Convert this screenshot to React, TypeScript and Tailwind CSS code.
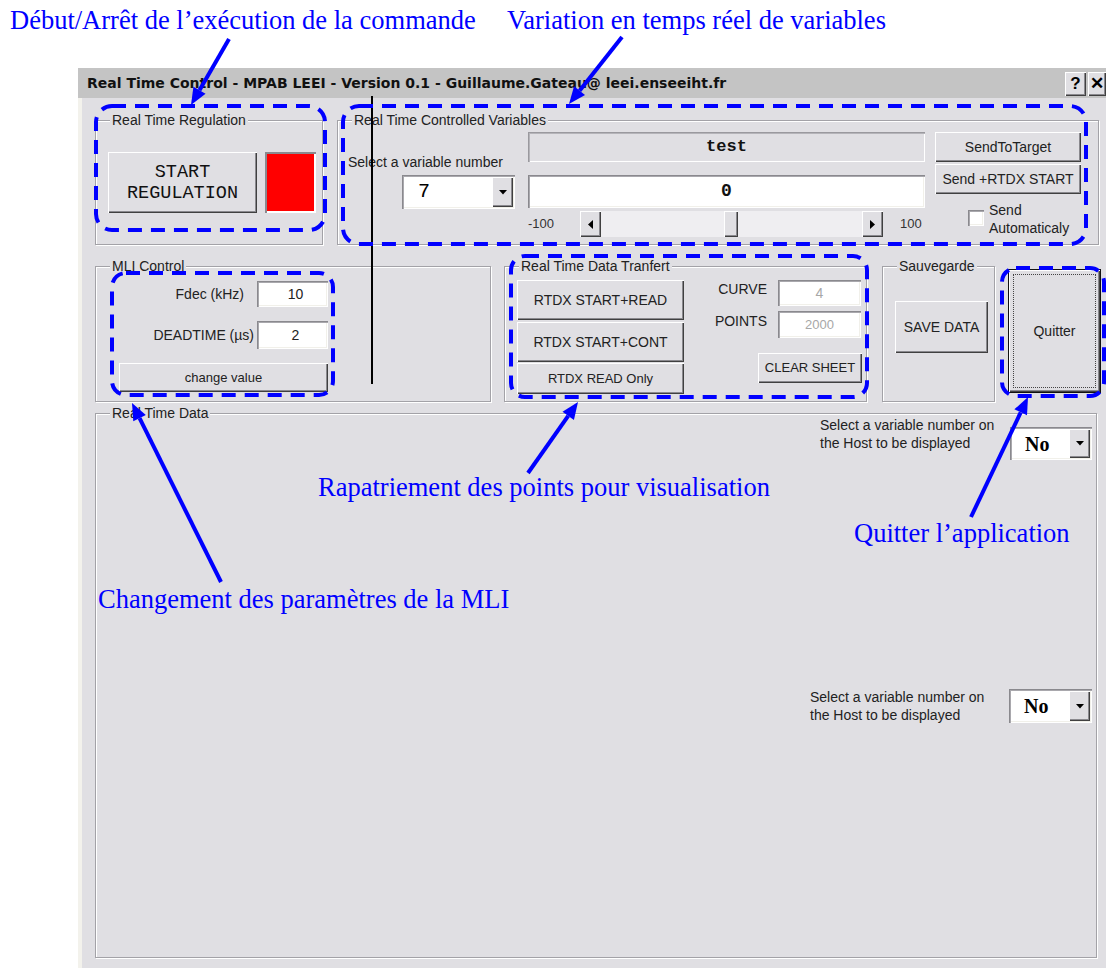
import React from "react";

const raised =
  "bg-[#e0dfe3] shadow-[inset_1px_1px_0_#ffffff,inset_-1px_-1px_0_#404040,inset_-2px_-2px_0_#8a898e]";
const sunken =
  "shadow-[inset_1px_1px_0_#8a898e,inset_2px_2px_0_#a9a8ad,inset_-1px_-1px_0_#ffffff,inset_-2px_-2px_0_#f1f0ea]";

function GroupBox({
  label,
  className,
  children,
}: {
  label: string;
  className: string;
  children?: React.ReactNode;
}) {
  return (
    <div
      className={`relative shrink-0 border border-[#a3a2a7] shadow-[inset_1px_1px_0_#ffffff,1px_1px_0_#ffffff] ${className}`}
    >
      <span className="absolute -top-[9px] left-[14px] bg-[#e0dfe3] px-[2px] text-[14px] leading-[16px] text-[#222]">
        {label}
      </span>
      {children}
    </div>
  );
}

function Tri({ dir }: { dir: "down" | "left" | "right" }) {
  if (dir === "down")
    return (
      <svg width="8" height="5" viewBox="0 0 8 5">
        <polygon points="0,0 8,0 4,4.5" fill="#000" />
      </svg>
    );
  if (dir === "left")
    return (
      <svg width="5" height="9" viewBox="0 0 5 9">
        <polygon points="5,0 5,9 0,4.5" fill="#000" />
      </svg>
    );
  return (
    <svg width="5" height="9" viewBox="0 0 5 9">
      <polygon points="0,0 0,9 5,4.5" fill="#000" />
    </svg>
  );
}

function Combo({
  value,
  className,
  textClass,
}: {
  value: string;
  className: string;
  textClass: string;
}) {
  return (
    <div className={`flex bg-white p-[2px] ${sunken} ${className}`}>
      <div className={`flex flex-1 items-center text-black ${textClass}`}>{value}</div>
      <div className={`flex w-[21px] items-center justify-center ${raised}`}>
        <Tri dir="down" />
      </div>
    </div>
  );
}

function Arrow({ x1, y1, x2, y2 }: { x1: number; y1: number; x2: number; y2: number }) {
  const dx = x2 - x1;
  const dy = y2 - y1;
  const len = Math.hypot(dx, dy);
  const ux = dx / len;
  const uy = dy / len;
  const hl = 17;
  const hw = 7;
  const bx = x2 - ux * hl;
  const by = y2 - uy * hl;
  const pts = `${x2},${y2} ${bx - uy * hw},${by + ux * hw} ${bx + uy * hw},${by - ux * hw}`;
  return (
    <g>
      <line x1={x1} y1={y1} x2={bx} y2={by} stroke="#0000ff" strokeWidth={4} />
      <polygon points={pts} fill="#0000ff" />
    </g>
  );
}

export default function App() {
  return (
    <div className="relative h-[968px] w-[1106px] overflow-hidden bg-white font-['Liberation_Sans',Arial,sans-serif]">
      {/* annotations above the window */}
      <div className="flex h-[68px] pt-[5px] font-['Liberation_Serif','Times_New_Roman',serif] text-[26.5px] leading-[30px] text-[#0000ff]">
        <span className="ml-[10px] w-[497px] shrink-0">Début/Arrêt de l’exécution de la commande</span>
        <span>Variation en temps réel de variables</span>
      </div>

      {/* window */}
      <div className="ml-[78px] w-[1028px]">
        <div className="flex h-[30px] items-center bg-[#c4c4c4] pl-[9px]">
          <span className="font-['DejaVu_Sans',sans-serif] text-[14px] font-bold text-[#111]">
            Real Time Control - MPAB LEEI - Version 0.1 - Guillaume.Gateau@ leei.enseeiht.fr
          </span>
          <div className="ml-auto flex gap-[2px] self-end pb-[2px]">
            <div className={`flex h-[24px] w-[21px] items-center justify-center text-[17px] font-bold ${raised}`}>?</div>
            <div className={`flex h-[24px] w-[18px] items-center justify-center text-[17px] font-bold ${raised}`}>✕</div>
          </div>
        </div>

        <div className="flex h-[870px] flex-col border-l-[4px] border-l-[#f3f2ec] bg-[#e0dfe3] pl-[13px] pt-[22px] text-[14px] text-[#222]">
          {/* row 1 */}
          <div className="flex">
            <GroupBox label="Real Time Regulation" className="h-[125px] w-[228px]">
              <div className="flex gap-[8px] pl-[12px] pt-[31px]">
                <div
                  className={`flex h-[61px] w-[149px] flex-col items-center justify-center font-['Liberation_Mono','Courier_New',monospace] text-[18.5px] leading-[21px] text-[#111] ${raised}`}
                >
                  <span>START</span>
                  <span>REGULATION</span>
                </div>
                <div className={`h-[61px] w-[51px] bg-[#ff0000] p-[3px] shadow-[inset_2px_2px_0_#8a898e,inset_-2px_-2px_0_#ffffff]`}>
                  <div className="h-full w-full bg-[#ff0000]" />
                </div>
              </div>
            </GroupBox>

            <GroupBox label="Real Time Controlled Variables" className="ml-[14px] h-[125px] w-[762px]">
              <div className="flex items-start pl-[10px] pt-[11px]">
                <div className="flex w-[167px] flex-col">
                  <span className="mt-[22px] leading-[16px]">Select a variable number</span>
                  <Combo
                    value="7"
                    className="ml-[54px] mt-[5px] h-[34px] w-[113px]"
                    textClass="pl-[14px] font-['Liberation_Mono','Courier_New',monospace] text-[20px]"
                  />
                </div>
                <div className="ml-[13px] flex w-[397px] flex-col">
                  <div
                    className={`flex h-[30px] items-center justify-center bg-[#e0dfe3] shadow-[inset_1px_1px_0_#9a999e,inset_2px_2px_0_#b5b4b9,inset_-1px_-1px_0_#ffffff] font-['Liberation_Mono','Courier_New',monospace] text-[17px] font-bold text-[#111]`}
                  >
                    test
                  </div>
                  <div
                    className={`mt-[13px] flex h-[33px] items-center justify-center bg-white font-['Liberation_Mono','Courier_New',monospace] text-[18px] font-bold text-[#111] ${sunken}`}
                  >
                    0
                  </div>
                  <div className="mt-[3px] flex h-[26px] items-center">
                    <span className="w-[52px] text-[13px] text-[#333]">-100</span>
                    <div className="flex h-[26px] w-[303px] bg-[#efeef1]">
                      <div className={`flex w-[21px] items-center justify-center ${raised}`}>
                        <Tri dir="left" />
                      </div>
                      <div className="flex flex-1">
                        <div className={`ml-[123px] w-[14px] ${raised}`} />
                      </div>
                      <div className={`flex w-[21px] items-center justify-center ${raised}`}>
                        <Tri dir="right" />
                      </div>
                    </div>
                    <span className="ml-[17px] text-[13px] text-[#333]">100</span>
                  </div>
                </div>
                <div className="ml-[10px] flex w-[146px] flex-col">
                  <div className={`flex h-[30px] items-center justify-center ${raised}`}>SendToTarget</div>
                  <div className={`mt-[2px] flex h-[30px] items-center justify-center ${raised}`}>Send +RTDX START</div>
                  <div className="mt-[7px] flex">
                    <div className={`ml-[33px] mt-[9px] h-[16px] w-[16px] bg-white ${sunken}`} />
                    <span className="ml-[5px] leading-[18px]">
                      Send
                      <br />
                      Automaticaly
                    </span>
                  </div>
                </div>
              </div>
            </GroupBox>
          </div>

          {/* row 2 */}
          <div className="mt-[21px] flex items-start">
            <GroupBox label="MLI Control" className="h-[136px] w-[396px]">
              <div className="flex w-[232px] flex-col pl-[23px] pt-[14px]">
                <div className="flex h-[26px] items-center justify-end">
                  <span className="mr-[13px]">Fdec (kHz)</span>
                  <div className={`flex h-[26px] w-[71px] items-center justify-center bg-white pl-[6px] ${sunken}`}>10</div>
                </div>
                <div className="mt-[14px] flex h-[28px] items-center justify-end">
                  <span className="mr-[3px]">DEADTIME (µs)</span>
                  <div className={`flex h-[28px] w-[71px] items-center justify-center bg-white pl-[6px] ${sunken}`}>2</div>
                </div>
                <div className={`mt-[14px] flex h-[29px] w-[209px] items-center justify-center text-[13px] ${raised}`}>
                  change value
                </div>
              </div>
            </GroupBox>

            <GroupBox label="Real Time Data Tranfert" className="ml-[13px] h-[136px] w-[363px]">
              <div className="flex pl-[12px] pt-[13px]">
                <div className="flex w-[167px] flex-col">
                  <div className={`flex h-[40px] items-center justify-center ${raised}`}>RTDX START+READ</div>
                  <div className={`mt-[2px] flex h-[40px] items-center justify-center ${raised}`}>RTDX START+CONT</div>
                  <div className={`mt-[1px] flex h-[31px] items-center justify-center text-[13px] ${raised}`}>RTDX READ Only</div>
                </div>
                <div className="flex w-[178px] flex-col items-end pr-[1px]">
                  <div className="flex items-start gap-[11px]">
                    <span className="pt-[1px] leading-[16px]">CURVE</span>
                    <div className={`flex h-[26px] w-[83px] items-center justify-center bg-white text-[#a7a7a7] ${sunken}`}>4</div>
                  </div>
                  <div className="mt-[5px] flex items-start gap-[11px]">
                    <span className="pt-[2px] leading-[16px]">POINTS</span>
                    <div className={`flex h-[27px] w-[83px] items-center justify-center bg-white text-[13px] text-[#a7a7a7] ${sunken}`}>
                      2000
                    </div>
                  </div>
                  <div className={`mr-[-1px] mt-[15px] flex h-[30px] w-[104px] items-center justify-center text-[13px] ${raised}`}>
                    CLEAR SHEET
                  </div>
                </div>
              </div>
            </GroupBox>

            <GroupBox label="Sauvegarde" className="ml-[15px] h-[136px] w-[113px]">
              <div className={`ml-[12px] mt-[34px] flex h-[52px] w-[93px] items-center justify-center ${raised}`}>SAVE DATA</div>
            </GroupBox>

            <div className="ml-[13px] mt-[3px] h-[124px] w-[93px] border border-[#111]">
              <div className={`flex h-full w-full p-[4px] ${raised}`}>
                <div className="flex flex-1 items-center justify-center border border-dotted border-[#444]">Quitter</div>
              </div>
            </div>
          </div>

          {/* row 3 */}
          <GroupBox label="Real Time Data" className="mt-[11px] h-[545px] w-[1002px]">
            <div className="flex flex-col items-end pr-[4px]">
              <div className="mt-[2px] flex">
                <span className="w-[190px] leading-[18px]">
                  Select a variable number on
                  <br />
                  the Host to be displayed
                </span>
                <Combo
                  value="No"
                  className="mt-[11px] h-[33px] w-[82px]"
                  textClass="pl-[13px] font-['Liberation_Serif','Times_New_Roman',serif] text-[20px] font-bold"
                />
              </div>
              <div className="mt-[228px] flex items-center">
                <span className="w-[199px] leading-[18px]">
                  Select a variable number on
                  <br />
                  the Host to be displayed
                </span>
                <Combo
                  value="No"
                  className="h-[34px] w-[83px]"
                  textClass="pl-[13px] font-['Liberation_Serif','Times_New_Roman',serif] text-[20px] font-bold"
                />
              </div>
            </div>
          </GroupBox>
        </div>
      </div>

      {/* annotation labels lying over the window */}
      <span className="absolute left-[318px] top-[472px] font-['Liberation_Serif','Times_New_Roman',serif] text-[26.5px] leading-[30px] text-[#0000ff]">
        Rapatriement des points pour visualisation
      </span>
      <span className="absolute left-[854px] top-[518px] font-['Liberation_Serif','Times_New_Roman',serif] text-[26.5px] leading-[30px] text-[#0000ff]">
        Quitter l’application
      </span>
      <span className="absolute left-[98px] top-[584px] font-['Liberation_Serif','Times_New_Roman',serif] text-[26.5px] leading-[30px] text-[#0000ff]">
        Changement des paramètres de la MLI
      </span>

      {/* highlight frames, arrows and the marker line */}
      <svg className="pointer-events-none absolute left-0 top-0" width="1106" height="968">
        <line x1="372" y1="96" x2="372" y2="384" stroke="#000" strokeWidth="2" />
        <g fill="none" stroke="#0000ff" strokeWidth="4" strokeDasharray="14 9">
          <rect x="96" y="106" width="229" height="124" rx="16" />
          <rect x="343" y="106" width="743" height="138" rx="16" />
          <rect x="112" y="273" width="221" height="122" rx="14" />
          <rect x="511" y="256" width="356" height="141" rx="14" />
          <rect x="1002" y="268" width="102" height="128" rx="14" />
        </g>
        <Arrow x1={229} y1={39} x2={191} y2={105} />
        <Arrow x1={622} y1={37} x2={569} y2={104} />
        <Arrow x1={221} y1={582} x2={132} y2={403} />
        <Arrow x1={528} y1={473} x2={578} y2={402} />
        <Arrow x1={971} y1={517} x2={1028} y2={397} />
      </svg>
    </div>
  );
}
